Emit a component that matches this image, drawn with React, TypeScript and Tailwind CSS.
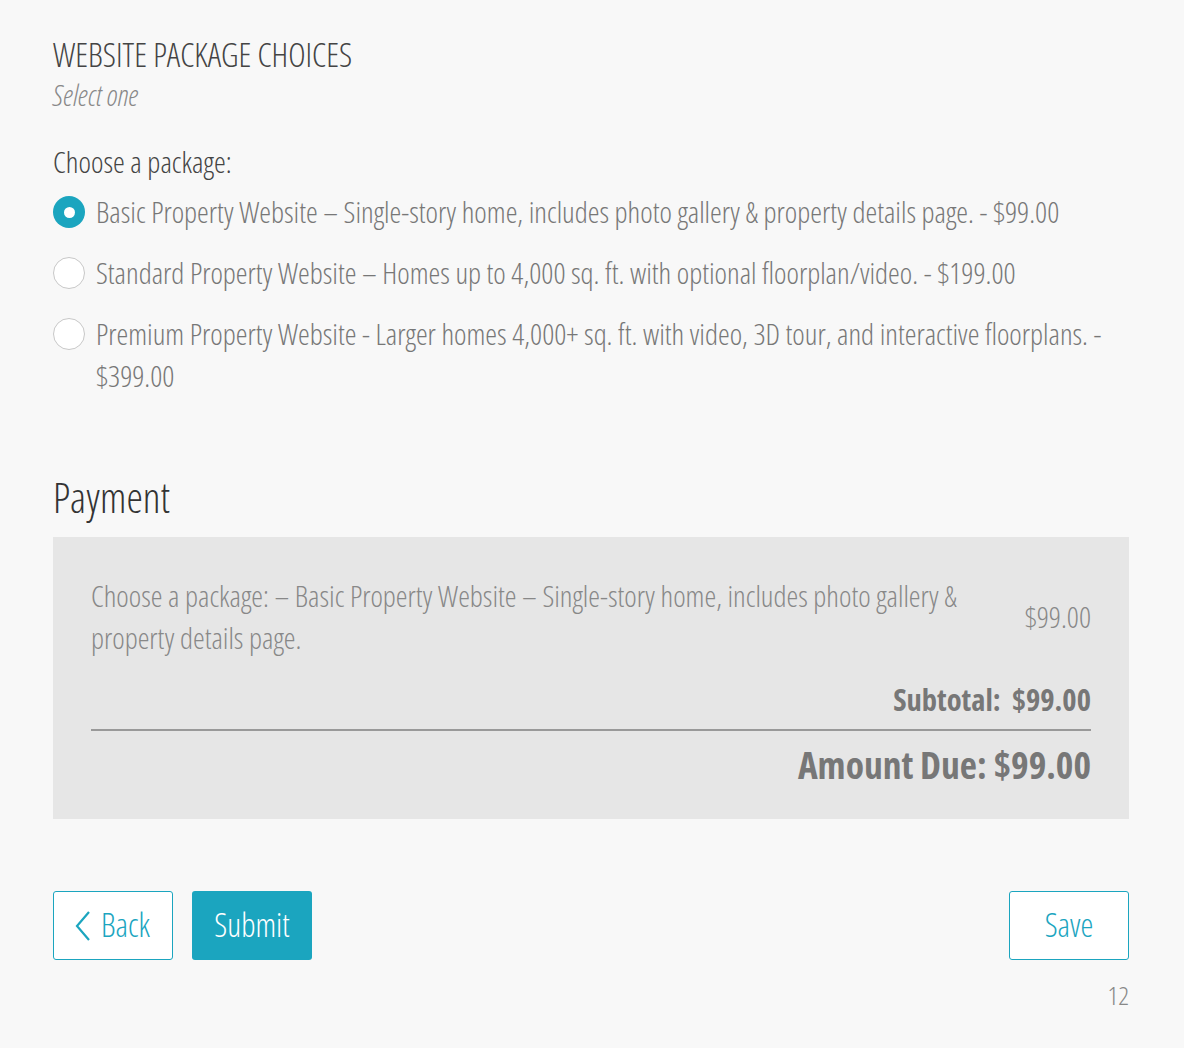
import React from "react";

const font = { fontFamily: "'Open Sans', 'Liberation Sans', sans-serif" };

function Radio({ checked }: { checked?: boolean }) {
  return checked ? (
    <span className="mt-[5px] flex h-[32px] w-[32px] shrink-0 items-center justify-center rounded-full bg-[#1ba5bf]">
      <span className="h-[11px] w-[11px] rounded-full bg-white" />
    </span>
  ) : (
    <span className="mt-[5px] h-[32px] w-[32px] shrink-0 rounded-full border border-[#c8c8c8] bg-white" />
  );
}

export default function App() {
  const options = [
    { label: "Basic Property Website – Single-story home, includes photo gallery & property details page. - $99.00", checked: true },
    { label: "Standard Property Website – Homes up to 4,000 sq. ft. with optional floorplan/video. - $199.00" },
    { label: "Premium Property Website - Larger homes 4,000+ sq. ft. with video, 3D tour, and interactive floorplans. - $399.00" },
  ];
  return (
    <div className="min-h-[1048px] w-full bg-[#f8f8f8] font-light [font-stretch:75%]" style={font}>
      <div className="w-[1182px] px-[53px] pt-[35px] pb-[20px]">
        <h1 className="text-[33px] leading-[40px] text-[#444] font-light">WEBSITE PACKAGE CHOICES</h1>
        <p className="mt-[2px] text-[28.8px] leading-[36px] italic text-[#888]">Select one</p>

        <p className="mt-[30px] text-[29.8px] leading-[38px] text-[#444]">Choose a package:</p>
        <div className="mt-[10px] flex flex-col gap-[19px]">
          {options.map((o, i) => (
            <div key={i} className="flex gap-[11px]">
              <Radio checked={o.checked} />
              <span className="text-[29.7px] leading-[42px] text-[#777]">{o.label}</span>
            </div>
          ))}
        </div>

        <h2 className="mt-[76px] text-[41.5px] leading-[48px] text-[#333]">Payment</h2>
        <div className="mt-[16px] bg-[#e6e6e6] px-[38px] pt-[38px] pb-[31px]">
          <div className="flex items-center justify-between gap-[40px]">
            <p className="w-[880px] text-[29.7px] leading-[42px] text-[#888]">
              Choose a package: – Basic Property Website – Single-story home, includes photo gallery &amp; property details page.
            </p>
            <span className="text-[29.7px] leading-[42px] text-[#888]">$99.00</span>
          </div>
          <div className="mt-[20px] text-right text-[30.5px] leading-[40px] font-bold text-[#777]">
            Subtotal:&nbsp; $99.00
          </div>
          <div className="mt-[10px] h-[2px] bg-[#999]" />
          <div className="mt-[11px] text-right text-[37.5px] leading-[46px] font-bold text-[#777]">
            Amount Due: $99.00
          </div>
        </div>

        <div className="mt-[72px] flex items-center justify-between">
          <div className="flex gap-[19px]">
            <button className="flex h-[69px] w-[120px] items-center justify-center gap-[9px] rounded-[3px] border border-[#1ba5bf] bg-white pr-[2px] text-[32.5px] text-[#1ba5bf] font-light">
              <svg width="18" height="32" viewBox="0 0 18 32" fill="none" stroke="#1ba5bf" strokeWidth="2.2">
                <path d="M15 2 L3 16 L15 30" />
              </svg>
              Back
            </button>
            <button className="flex h-[69px] w-[120px] items-center justify-center rounded-[3px] bg-[#1ba5bf] text-[32.5px] text-white font-light">
              Submit
            </button>
          </div>
          <button className="flex h-[69px] w-[120px] items-center justify-center rounded-[3px] border border-[#1ba5bf] bg-white text-[32.5px] text-[#1ba5bf] font-light">
            Save
          </button>
        </div>
        <div className="mt-[19px] text-right text-[26.5px] leading-[32px] text-[#888]">12</div>
      </div>
    </div>
  );
}
